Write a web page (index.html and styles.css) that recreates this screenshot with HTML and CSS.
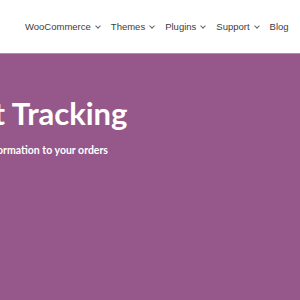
FILE: index.html
```html
<!DOCTYPE html>
<html lang="en">
<head>
    <meta charset="UTF-8">
    <title>Shipment Tracking</title>
    <link rel="stylesheet" href="styles.css">
</head>
<body>

<div class="header">
    <ul class="nav">
        <li>WooCommerce <span class="caret"></span></li>
        <li>Themes <span class="caret"></span></li>
        <li>Plugins <span class="caret"></span></li>
        <li>Support <span class="caret"></span></li>
        <li>Blog</li>
    </ul>
</div>

<div class="hero">
    <div class="hero-inner">
        <h1>Shipment Tracking</h1>
        <p>Add shipment tracking information to your orders</p>
    </div>
</div>

</body>
</html>
```
FILE: styles.css
```css
body {
    margin: 0;
    font-family: Lato, Arial, sans-serif;
    overflow: hidden;
}
.header {
    height: 53px;
    background-color: #fff;
    display: flex;
    align-items: center;
}
.nav {
    list-style: none;
    margin: 0;
    padding: 0 0 0 25px;
    display: flex;
    gap: 11px;
    white-space: nowrap;
    font-family: "Liberation Sans", Arial, sans-serif;
    font-size: 9.5px;
    color: #3c3c3c;
}
.nav li {
    display: flex;
    align-items: center;
    gap: 3px;
}
.caret {
    width: 3px;
    height: 3px;
    border-right: 1px solid #666;
    border-bottom: 1px solid #666;
    transform: rotate(45deg);
    margin: -2px 0 0 2px;
}
.hero {
    height: 247px;
    background-color: #96588a;
    border-top: 1px solid #b58aab;
    overflow: hidden;
}
.hero-inner {
    margin-left: -126px;
    padding-top: 40px;
    white-space: nowrap;
    color: #fff;
}
.hero h1 {
    margin: 0 0 12px;
    font-size: 31px;
    font-weight: 700;
}
.hero p {
    margin: 0 0 0 3px;
    font-size: 10.5px;
    font-weight: 700;
}
```
